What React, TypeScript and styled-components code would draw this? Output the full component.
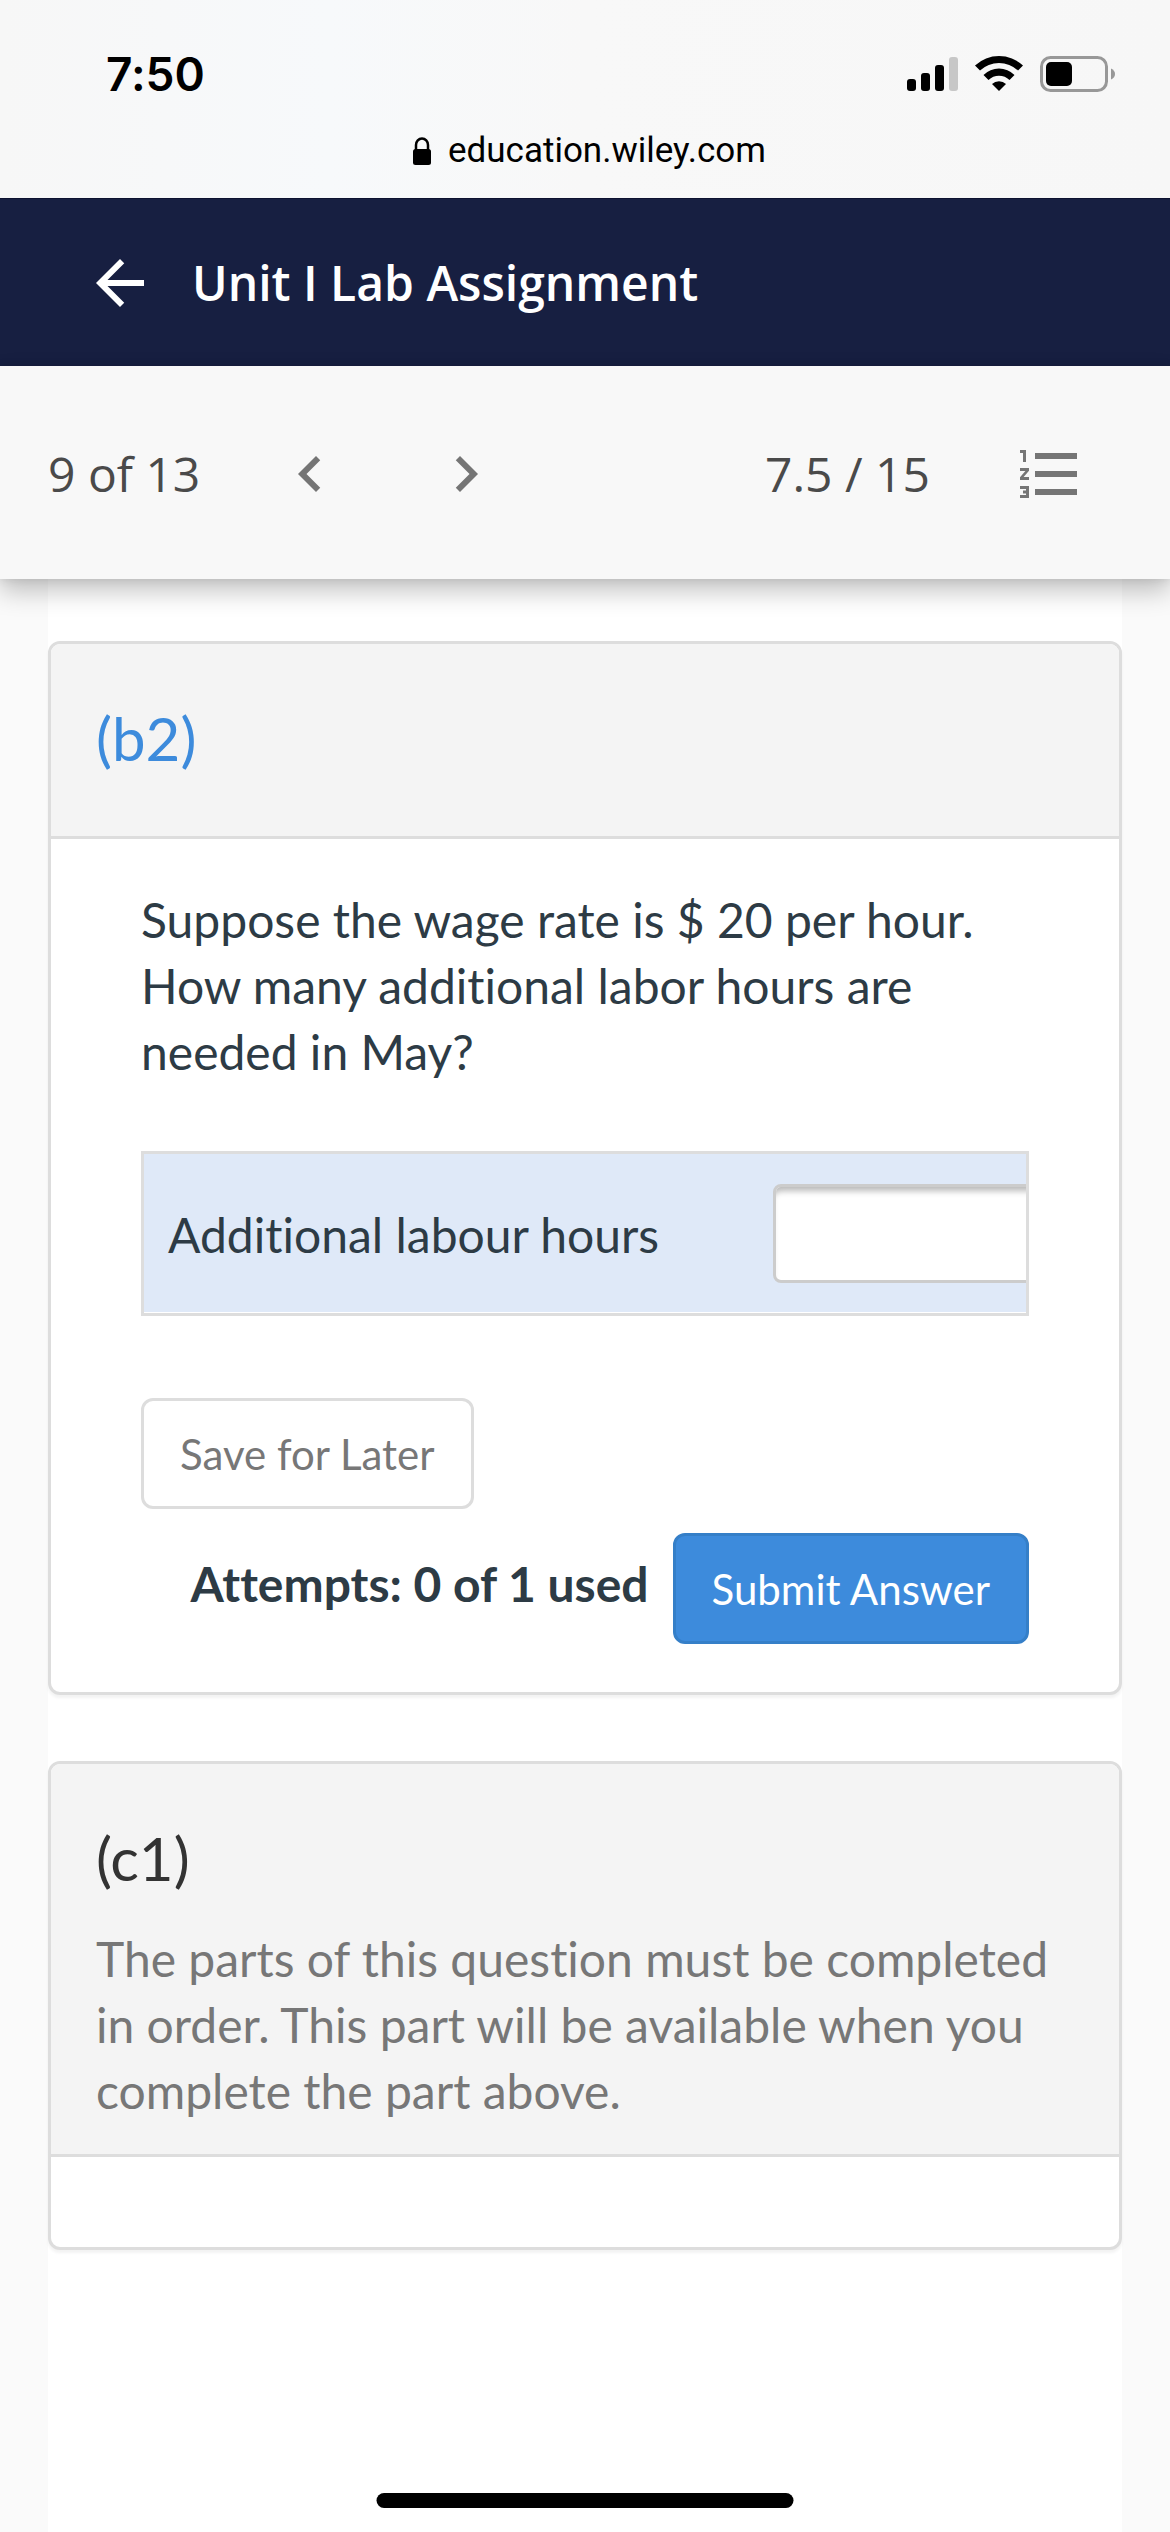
import React from "react";
import styled, { createGlobalStyle } from "styled-components";
import {
  MdArrowBack,
  MdChevronLeft,
  MdChevronRight,
  MdFormatListNumbered,
} from "react-icons/md";

const GlobalStyle = createGlobalStyle`
  *, *::before, *::after { box-sizing: border-box; }
  body {
    margin: 0;
    background: #fafafa;
    color: #2d3b45;
    font-family: Lato, "Liberation Sans", sans-serif;
    font-size: 48px;
    font-variant-ligatures: none;
    line-height: 66px;
  }
`;

const Page = styled.div`
  display: flex;
  flex-direction: column;
  min-height: 100vh;
`;

/* ---------- browser chrome ---------- */

const BrowserBar = styled.div`
  padding: 44px 54px 0 106px;
  height: 198px;
  background: linear-gradient(90deg, #f7f7f7 0%, #f7f9fb 28%, #f8f8f8 50%, #f7f7f7 100%);
  color: #000;
  font-family: Inter, Roboto, sans-serif;
`;

const StatusRow = styled.div`
  display: flex;
  align-items: center;
  justify-content: space-between;
  height: 60px;
`;

const Clock = styled.span`
  font-size: 46px;
  font-weight: 600;
  line-height: 60px;
`;

const StatusIcons = styled.svg`
  display: block;
  width: 210px;
  height: 42px;
`;

const AddressRow = styled.div`
  display: flex;
  align-items: center;
  justify-content: center;
  gap: 16px;
  height: 94px;
  margin-left: -52px;
`;

const Address = styled.span`
  font-family: Roboto, Inter, sans-serif;
  font-size: 35px;
  line-height: 48px;
`;

const Lock = styled.svg`
  width: 28px;
  height: 28px;
`;

/* ---------- assignment header ---------- */

const TitleBar = styled.header`
  display: flex;
  align-items: center;
  gap: 36px;
  height: 168px;
  padding: 0 84px;
  border-top: 1px solid #0d1230;
  background: #171f41;
  color: #fff;
`;

const Title = styled.h1`
  margin: 0;
  font-family: "Open Sans", "Noto Sans", sans-serif;
  font-size: 48px;
  font-weight: 600;
  line-height: 66px;
`;

const IconButton = styled.button`
  display: flex;
  flex: none;
  padding: 0;
  border: 0;
  background: none;
  color: inherit;
  font-size: 72px;
  cursor: pointer;
`;

const Toolbar = styled.nav`
  position: relative;
  z-index: 1;
  display: flex;
  align-items: center;
  justify-content: space-between;
  height: 213px;
  padding: 3px 84px 0 48px;
  background: #f8f8f8;
  box-shadow: 0 12px 24px rgba(0, 0, 0, 0.24), 0 0 9px rgba(0, 0, 0, 0.1);
  color: #757575;
`;

const ToolGroup = styled.div<{ $gap: number }>`
  display: flex;
  align-items: center;
  gap: ${(p) => p.$gap}px;
`;

const Pager = styled.div`
  display: flex;
  gap: 84px;
`;

const ToolText = styled.span`
  color: #4a4a4a;
  font-family: "Open Sans", "Noto Sans", sans-serif;
`;

/* ---------- question parts ---------- */

const Column = styled.main`
  display: flex;
  flex: 1;
  flex-direction: column;
  gap: 66px;
  margin: 0 48px;
  padding: 62px 0;
  background: #fff;
`;

const Card = styled.section`
  overflow: hidden;
  border: 3px solid #ddd;
  border-radius: 12px;
  background: #fff;
  box-shadow: 0 3px 3px rgba(0, 0, 0, 0.05);
`;

const CardHeader = styled.div`
  padding: 58px 45px 30px;
  border-bottom: 3px solid #ddd;
  background: #f4f4f4;
`;

const CardTitle = styled.h2<{ $color: string }>`
  margin: 0 0 32px;
  color: ${(p) => p.$color};
  font-size: 60px;
  font-weight: 400;
  line-height: 72px;
`;

const Notice = styled.p`
  margin: 0;
  color: #777;
`;

const CardBody = styled.div`
  padding: 45px;
`;

const Question = styled.form`
  padding: 3px 45px;
`;

const Prompt = styled.p`
  margin: 0 0 66px;
`;

const TableFrame = styled.div`
  overflow: hidden;
  margin-bottom: 82px;
  padding-bottom: 1px;
  border: 3px solid #ddd;
`;

const AnswerTable = styled.table`
  width: 100%;
  border-collapse: collapse;
  table-layout: fixed;
  background: #dfe9f8;
`;

const LabelCell = styled.th`
  padding: 3px 24px 0;
  font-weight: 400;
  text-align: left;
`;

const InputCell = styled.td`
  width: 253px;
  padding: 30px 0 29px;
`;

const AnswerInput = styled.input`
  display: block;
  width: 300px;
  height: 99px;
  padding: 12px 18px;
  border: 3px solid #ccc;
  border-radius: 8px;
  background: #fff;
  box-shadow: inset 0 8px 6px -4px rgba(0, 0, 0, 0.28);
  color: inherit;
  font: inherit;
  outline: none;
`;

const ActionButton = styled.button<{ $primary?: boolean }>`
  flex: none;
  height: 111px;
  padding: 0 36px;
  border: 3px solid ${(p) => (p.$primary ? "#357fc8" : "#ddd")};
  border-radius: 12px;
  background: ${(p) => (p.$primary ? "#3d8bdc" : "#fff")};
  color: ${(p) => (p.$primary ? "#fff" : "#777")};
  font-family: inherit;
  font-size: 42px;
  line-height: 60px;
  cursor: pointer;
`;

const SubmitRow = styled.div`
  display: flex;
  align-items: center;
  justify-content: flex-end;
  gap: 24px;
  margin-top: 24px;
`;

const Attempts = styled.strong`
  padding-bottom: 10px;
  font-weight: 700;
`;

const HomeIndicator = styled.div`
  position: fixed;
  bottom: 24px;
  left: 50%;
  z-index: 2;
  width: 417px;
  height: 15px;
  border-radius: 8px;
  background: #000;
  transform: translateX(-50%);
`;

function StatusGlyphs() {
  return (
    <StatusIcons viewBox="0 0 210 42" role="img" aria-label="Signal, Wi-Fi, battery">
      <rect x="1" y="26" width="9" height="12" rx="3" />
      <rect x="15" y="20" width="9" height="18" rx="3" />
      <rect x="29" y="12" width="9" height="26" rx="3" />
      <rect x="43" y="4" width="9" height="34" rx="3" fill="#c7c7c7" />
      <path d="M69 12.500a35 35 0 0 1 48 0l-5 5a28 28 0 0 0-38 0z" />
      <path d="M77.500 22a22 22 0 0 1 31 0l-5 5a15 15 0 0 0-21 0z" />
      <path d="M86 31a10 10 0 0 1 14 0l-7 7z" />
      <rect x="135.500" y="4.500" width="65" height="33" rx="9" fill="none" stroke="#989898" strokeWidth="3" />
      <rect x="140" y="9" width="26" height="24" rx="5" />
      <path d="M205 15.500q4 2 4 5.500t-4 5.500z" fill="#989898" />
    </StatusIcons>
  );
}

export default function App() {
  return (
    <>
      <GlobalStyle />
      <Page>
        <BrowserBar>
          <StatusRow>
            <Clock>7:50</Clock>
            <StatusGlyphs />
          </StatusRow>
          <AddressRow>
            <Lock viewBox="0 0 28 28" aria-hidden="true">
              <rect x="9" y="12" width="18" height="16" rx="2.500" />
              <path d="M12 13V8a6 6.500 0 0 1 12 0v5" fill="none" stroke="#000" strokeWidth="2.500" />
            </Lock>
            <Address>education.wiley.com</Address>
          </AddressRow>
        </BrowserBar>

        <TitleBar>
          <IconButton type="button" aria-label="Back">
            <MdArrowBack />
          </IconButton>
          <Title>Unit I Lab Assignment</Title>
        </TitleBar>

        <Toolbar aria-label="Questions">
          <ToolGroup $gap={74}>
            <ToolText>9 of 13</ToolText>
            <Pager>
              <IconButton type="button" aria-label="Previous question">
                <MdChevronLeft />
              </IconButton>
              <IconButton type="button" aria-label="Next question">
                <MdChevronRight />
              </IconButton>
            </Pager>
          </ToolGroup>
          <ToolGroup $gap={84}>
            <ToolText>7.5 / 15</ToolText>
            <IconButton type="button" aria-label="Question list">
              <MdFormatListNumbered />
            </IconButton>
          </ToolGroup>
        </Toolbar>

        <Column>
          <Card>
            <CardHeader>
              <CardTitle $color="#3d8bdc">(b2)</CardTitle>
            </CardHeader>
            <CardBody>
              <Question onSubmit={(e) => e.preventDefault()}>
                <Prompt>
                  Suppose the wage rate is $ 20 per hour. How many additional labor hours are needed
                  in May?
                </Prompt>
                <TableFrame>
                  <AnswerTable>
                    <tbody>
                      <tr>
                        <LabelCell scope="row">
                          <label htmlFor="labour-hours">Additional labour hours</label>
                        </LabelCell>
                        <InputCell>
                          <AnswerInput id="labour-hours" type="text" />
                        </InputCell>
                      </tr>
                    </tbody>
                  </AnswerTable>
                </TableFrame>
                <ActionButton type="button">Save for Later</ActionButton>
                <SubmitRow>
                  <Attempts>Attempts: 0 of 1 used</Attempts>
                  <ActionButton type="submit" $primary>
                    Submit Answer
                  </ActionButton>
                </SubmitRow>
              </Question>
            </CardBody>
          </Card>

          <Card>
            <CardHeader>
              <CardTitle $color="#333">(c1)</CardTitle>
              <Notice>
                The parts of this question must be completed in order. This part will be available
                when you complete the part above.
              </Notice>
            </CardHeader>
            <CardBody />
          </Card>
        </Column>
      </Page>
      <HomeIndicator />
    </>
  );
}
